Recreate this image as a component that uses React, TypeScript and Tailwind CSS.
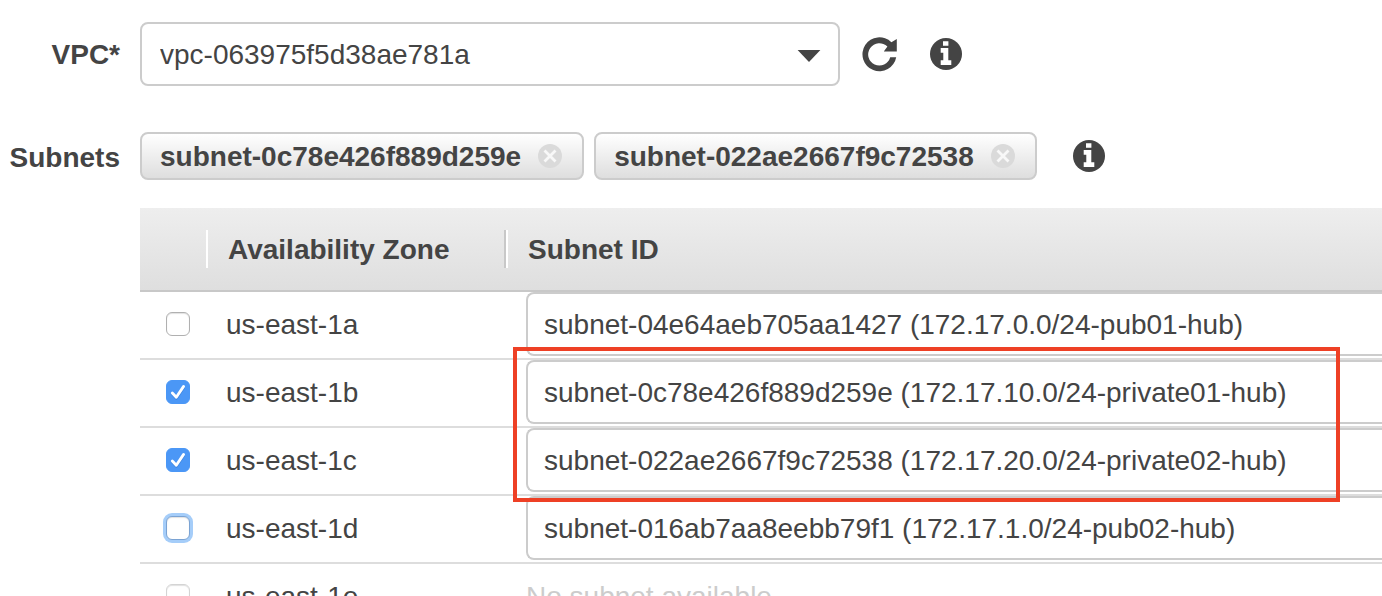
import React from "react";

type Zone = {
  name: string;
  subnet?: string;
  checked?: boolean;
  focused?: boolean;
};

const zones: Zone[] = [
  { name: "us-east-1a", subnet: "subnet-04e64aeb705aa1427 (172.17.0.0/24-pub01-hub)" },
  { name: "us-east-1b", subnet: "subnet-0c78e426f889d259e (172.17.10.0/24-private01-hub)", checked: true },
  { name: "us-east-1c", subnet: "subnet-022ae2667f9c72538 (172.17.20.0/24-private02-hub)", checked: true },
  { name: "us-east-1d", subnet: "subnet-016ab7aa8eebb79f1 (172.17.1.0/24-pub02-hub)", focused: true },
  { name: "us-east-1e" },
];

const selectedSubnets = ["subnet-0c78e426f889d259e", "subnet-022ae2667f9c72538"];

function InfoButton({ label }: { label: string }) {
  return (
    <button type="button" aria-label={label} className="shrink-0 rounded-full">
      <svg viewBox="0 0 32 32" className="block size-8" aria-hidden="true">
        <circle cx="16" cy="16" r="16" fill="#444" />
        <path
          d="M13 3.3h5.4v4.4H13zM10.7 10h7.6v12.3h3V27H10.7v-4.7h2.6v-7.6h-2.6z"
          fill="#fff"
        />
      </svg>
    </button>
  );
}

function RefreshButton() {
  return (
    <button type="button" aria-label="Refresh VPC list" className="shrink-0">
      <svg viewBox="0 0 36 36" className="block size-9" aria-hidden="true">
        <path
          d="M34.2 21.2A17 17 0 1 1 29.4 6.2L34.8 3V15.6H21.8L25.4 10.6A11.2 11.2 0 1 0 28.2 21.2z"
          fill="#444"
        />
      </svg>
    </button>
  );
}

function SubnetChip({ id }: { id: string }) {
  return (
    <li className="flex h-12 items-center gap-[17px] rounded-lg border-2 border-[#ccc] bg-linear-to-b from-white to-[#dedede] pl-[18px] pr-5 font-bold">
      <span className="pt-[2px]">{id}</span>
      <button type="button" aria-label={`Remove ${id}`} className="shrink-0">
        <svg viewBox="0 0 24 24" className="block size-6" aria-hidden="true">
          <circle cx="12" cy="12" r="12" fill="#dadada" />
          <path d="M6.5 6.5l11 11M17.5 6.5l-11 11" stroke="#f8f8f8" strokeWidth="2.8" />
        </svg>
      </button>
    </li>
  );
}

function ZoneCheckbox({ zone }: { zone: Zone }) {
  const tone = zone.focused
    ? "border-[#7ba3d3] ring-3 ring-[#a5cdf9]"
    : zone.subnet
      ? "border-[#b0b0b0]"
      : "border-[#d4d4d4]";
  return (
    <span className="relative block size-6">
      <input
        id={zone.name}
        type="checkbox"
        defaultChecked={zone.checked}
        disabled={!zone.subnet}
        className={`peer block size-6 appearance-none rounded-[6px] border bg-white shadow-[inset_0_1px_1px_rgba(0,0,0,0.12)] outline-none checked:border-[#4b97f6] checked:bg-[#4b97f6] checked:shadow-none ${tone}`}
      />
      <svg
        viewBox="0 0 24 24"
        className="pointer-events-none absolute inset-0 hidden size-6 peer-checked:block"
        fill="none"
        strokeLinecap="round"
        strokeLinejoin="round"
        strokeWidth="2.8"
        aria-hidden="true"
      >
        <path d="M6.3 14l4 4.4L17.6 7.6" stroke="#3f86e0" />
        <path d="M6.3 13l4 4.2L17.6 6.4" stroke="#fff" />
      </svg>
    </span>
  );
}

export default function App() {
  return (
    <main className="h-screen overflow-hidden bg-white pt-[22px] font-['Liberation_Sans',Arial,sans-serif] text-[28px] leading-8 text-[#444]">
      <div className="flex items-center gap-5">
        <label htmlFor="vpc" className="w-[120px] shrink-0 pt-[2px] text-right font-bold">
          VPC*
        </label>
        <div className="flex min-w-0 flex-1 items-center">
          <div className="relative w-full max-w-[700px]">
            <select
              id="vpc"
              className="block h-16 w-full appearance-none rounded-lg border-2 border-[#ccc] bg-white px-[18px] pt-[2px]"
            >
              <option>vpc-063975f5d38ae781a</option>
            </select>
            <svg
              viewBox="0 0 24 12"
              className="pointer-events-none absolute right-[19px] top-[28px] h-3 w-6"
              aria-hidden="true"
            >
              <path d="M.6 0h22.8L12 12z" fill="#444" />
            </svg>
          </div>
          <div className="ml-[22px] flex items-center gap-8">
            <RefreshButton />
            <InfoButton label="About VPC" />
          </div>
        </div>
      </div>

      <div className="mt-[46px] flex items-center gap-5">
        <span className="w-[120px] shrink-0 pt-1 text-right font-bold">Subnets</span>
        <ul className="flex gap-[10px]">
          {selectedSubnets.map((id) => (
            <SubnetChip key={id} id={id} />
          ))}
        </ul>
        <div className="ml-4 flex">
          <InfoButton label="About subnets" />
        </div>
      </div>

      <div className="relative ml-[140px] mt-7">
        <table className="w-full table-fixed border-separate border-spacing-0 text-left">
          <colgroup>
            <col className="w-[66px]" />
            <col className="w-[300px]" />
            <col />
          </colgroup>
          <thead>
            <tr className="bg-linear-to-b from-[#eee] to-[#dedede]">
              <th className="h-[84px] border-b-2 border-[#c8c8c8] p-0" aria-label="Selected" />
              <th className="h-[84px] border-b-2 border-[#c8c8c8] p-0">
                <div className="flex h-[38px] items-center border-l-2 border-r-2 border-l-white border-r-[#c8c8c8] pl-5 pt-[2px]">
                  Availability Zone
                </div>
              </th>
              <th className="h-[84px] border-b-2 border-[#c8c8c8] p-0">
                <div className="flex h-[38px] items-center border-l-2 border-white pl-5 pt-[2px]">
                  Subnet ID
                </div>
              </th>
            </tr>
          </thead>
          <tbody>
            {zones.map((zone) => (
              <tr key={zone.name}>
                <td className="border-b-2 border-[#ddd] p-0 pb-[2px]">
                  <div className="flex h-16 items-center pl-[26px]">
                    <ZoneCheckbox zone={zone} />
                  </div>
                </td>
                <td className="border-b-2 border-[#ddd] p-0 pb-[2px]">
                  <label htmlFor={zone.name} className="flex h-16 items-center pl-5 pt-[2px]">
                    {zone.name}
                  </label>
                </td>
                <td className="border-b-2 border-[#ddd] p-0 pb-[2px] pl-5">
                  {zone.subnet ? (
                    <select
                      aria-label={`Subnet for ${zone.name}`}
                      className="block h-16 w-full appearance-none rounded-l-lg border-2 border-r-0 border-[#ccc] bg-white px-4 pt-[2px]"
                    >
                      <option>{zone.subnet}</option>
                    </select>
                  ) : (
                    <div className="flex h-16 items-center pt-[2px] text-[#ccc]">
                      No subnet available
                    </div>
                  )}
                </td>
              </tr>
            ))}
          </tbody>
        </table>
        <div className="pointer-events-none absolute left-[373px] top-[139px] h-[155px] w-[827px] border-4 border-[#ee4025]" />
      </div>
    </main>
  );
}
